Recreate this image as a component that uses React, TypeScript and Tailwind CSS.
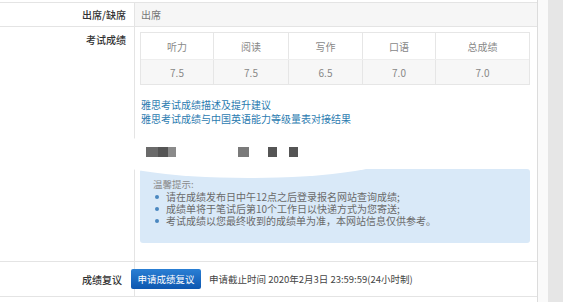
import React from "react";

const cols = [
  { h: "听力", v: "7.5", w: "w-[73px]" },
  { h: "阅读", v: "7.5", w: "w-[75px]" },
  { h: "写作", v: "6.5", w: "w-[74px]" },
  { h: "口语", v: "7.0", w: "w-[73px]" },
  { h: "总成绩", v: "7.0", w: "flex-1" },
];

export default function App() {
  return (
    <div
      className="w-[563px] h-[302px] overflow-hidden bg-white flex text-[10px]"
      style={{ fontFamily: '"Noto Sans CJK SC", "Noto Sans", sans-serif' }}
    >
      <div className="w-[538px] flex flex-col pt-[2px] border-r border-[#dcdcdc]">
        {/* Row 1 */}
        <div className="flex h-[25px] border-t border-b border-[#e4e4e4]">
          <div className="w-[135px] border-r border-[#e4e4e4] flex items-center justify-end pr-[8px] text-[#333] font-medium">
            出席/缺席
          </div>
          <div className="flex-1 bg-[#f6f6f6] flex items-center pl-[6px] text-[#777]">出席</div>
        </div>
        {/* Row 2 */}
        <div className="flex h-[235px] border-b border-[#e4e4e4]">
          <div className="w-[135px] border-r border-[#e4e4e4] flex justify-end pr-[8px] pt-[5px] text-[#333] font-medium">
            考试成绩
          </div>
          <div className="flex-1 pl-[5px] pr-[7px] pt-[5px] flex flex-col relative">
            <div className="flex flex-col border border-[#e6e6e6] text-[#888]">
              <div className="flex h-[26px]">
                {cols.map((c, i) => (
                  <div
                    key={c.h}
                    className={`${c.w} flex items-center justify-center ${i < 4 ? "border-r border-[#e6e6e6]" : ""}`}
                  >
                    {c.h}
                  </div>
                ))}
              </div>
              <div className="flex h-[25px] bg-[#f7f7f7] border-t border-[#eeeeee]">
                {cols.map((c, i) => (
                  <div
                    key={c.h}
                    className={`${c.w} flex items-center justify-center ${i < 4 ? "border-r border-[#e6e6e6]" : ""}`}
                  >
                    {c.v}
                  </div>
                ))}
              </div>
            </div>
            <div className="mt-[13px] leading-[14px] text-[#2b7bb0] pl-[1px]">
              <div>雅思考试成绩描述及提升建议</div>
              <div>雅思考试成绩与中国英语能力等级量表对接结果</div>
            </div>
            <div className="mt-[20px] h-[11px] flex items-center pl-[6px] relative z-10">
              <div className="w-[12px] h-[10px] bg-[#6a6a6a]" />
              <div className="w-[10px] h-[10px] bg-[#555]" />
              <div className="w-[8px] h-[10px] bg-[#8a8a8a]" />
              <div className="w-[62px]" />
              <div className="w-[11px] h-[10px] bg-[#7a7a7a]" />
              <div className="w-[19px]" />
              <div className="w-[9px] h-[10px] bg-[#555]" />
              <div className="w-[12px]" />
              <div className="w-[9px] h-[10px] bg-[#555]" />
            </div>
            <div className="mt-[12px] h-[74px] bg-[#d9e9f8] rounded-[3px] pl-[13px] pt-[9px] text-[#6a6a6a] text-[10px] leading-[12px]">
              <div className="text-[#8a8a8a] text-[9.5px] mb-[1px]">温馨提示:</div>
              <ul className="pl-[2px]">
                {[
                  "请在成绩发布日中午12点之后登录报名网站查询成绩;",
                  "成绩单将于笔试后第10个工作日以快递方式为您寄送;",
                  "考试成绩以您最终收到的成绩单为准，本网站信息仅供参考。",
                ].map((t) => (
                  <li key={t} className="flex items-center gap-[7px] h-[12px]">
                    <span className="w-[4px] h-[4px] rounded-full bg-[#4a87c0]" />
                    {t}
                  </li>
                ))}
              </ul>
            </div>
            <div className="absolute left-[-36px] top-[103px] w-[300px] h-[48px] rounded-[50%] bg-white" />
          </div>
        </div>
        {/* Row 3 */}
        <div className="flex h-[35px] border-b border-[#e4e4e4]">
          <div className="w-[135px] border-r border-[#e4e4e4] flex items-center justify-end pr-[12px] text-[#333] font-medium">
            成绩复议
          </div>
          <div className="flex-1 flex items-center pl-0">
            <div className="ml-[-4px] w-[70px] h-[20px] rounded-[2px] bg-gradient-to-b from-[#2a7fd4] to-[#0d57b0] text-white text-[9.5px] flex items-center justify-center">
              申请成绩复议
            </div>
            <div className="ml-[8px] text-[#444] text-[9.5px]">申请截止时间 2020年2月3日 23:59:59(24小时制)</div>
          </div>
        </div>
      </div>
      <div className="w-[10px] bg-[#fafafa]" />
      <div className="flex-1 bg-[#e6e6e6]" />
    </div>
  );
}
